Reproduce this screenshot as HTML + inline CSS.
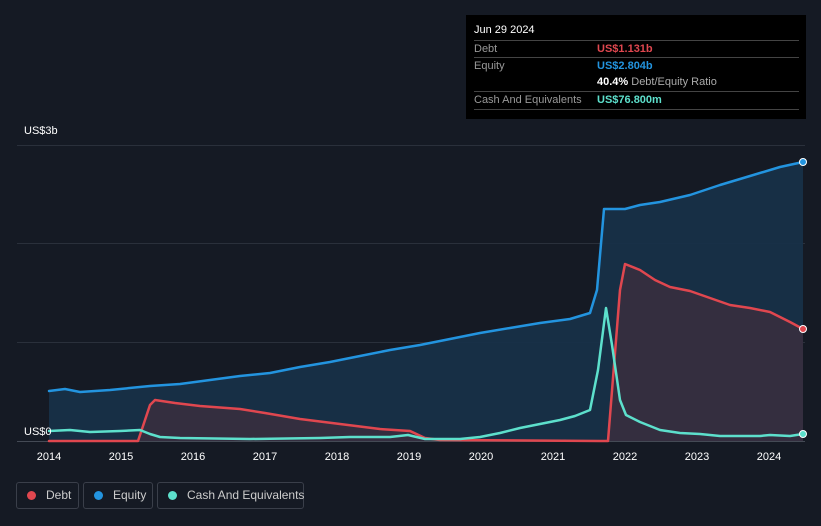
<!DOCTYPE html>
<html><head><style>
html,body{margin:0;width:821px;height:526px;overflow:hidden}
body{background:#151a24;font-family:"Liberation Sans",sans-serif;position:relative}
.tt{position:absolute;left:466px;top:15px;width:340px;height:104px;background:#000;color:#fff;font-size:11px}
.row{position:absolute;left:8px;width:325px;height:17px;border-top:1px solid #444}
.row span{position:absolute;top:2px;white-space:nowrap}
.lab{left:0;color:#999}
.val{left:123px;font-weight:bold}
.leg{position:absolute;top:482px;height:27px;border:1px solid #3a3f4a;border-radius:3px;color:#ccc;font-size:12px;line-height:25px;box-sizing:border-box;white-space:nowrap}
.dot{display:inline-block;width:9px;height:9px;border-radius:50%;margin:0 10px 0 10px;vertical-align:-1px}
</style></head><body>
<svg width="821" height="526" style="position:absolute;left:0;top:0">
<g stroke="#2a303b" stroke-width="1">
<line x1="17" y1="145.5" x2="805" y2="145.5"/>
<line x1="17" y1="243.5" x2="805" y2="243.5"/>
<line x1="17" y1="342.5" x2="805" y2="342.5"/>
<line x1="17" y1="441.5" x2="805" y2="441.5" stroke="#444a55"/>
</g>
<polygon fill="#173048" opacity="0.95" points="49,441 49,391 65,389 80,392 110,390 150,386 180,384 210,380 240,376 270,373 300,367 330,362 360,356 390,350 420,345 450,339 480,333 510,328 540,323 570,319 590,313 597,290 604,209 625,209 640,205 660,202 690,195 720,185 750,176 780,167 803,162 803,441"/>
<polygon fill="#3a2e3e" opacity="0.85" points="138,441 150,405 155,400 175,403 200,406 240,409 265,413 300,419 340,424 380,429 410,431 425,438 440,440 600,441 608,441 620,290 625,264 640,270 655,280 670,287 690,291 710,298 730,305 750,308 770,312 790,322 803,329 803,441"/>
<g fill="none" stroke-width="2.5" stroke-linejoin="round" stroke-linecap="round">
<polyline stroke="#2394df" points="49,391 65,389 80,392 110,390 150,386 180,384 210,380 240,376 270,373 300,367 330,362 360,356 390,350 420,345 450,339 480,333 510,328 540,323 570,319 590,313 597,290 604,209 625,209 640,205 660,202 690,195 720,185 750,176 780,167 803,162"/>
<polyline stroke="#e0474f" points="49,441 138,441 150,405 155,400 175,403 200,406 240,409 265,413 300,419 340,424 380,429 410,431 425,438 440,440 600,441 608,441 620,290 625,264 640,270 655,280 670,287 690,291 710,298 730,305 750,308 770,312 790,322 803,329"/>
<polyline stroke="#5de0cc" points="49,431 70,430 90,432 120,431 140,430 150,434 160,437 180,438 250,439 320,438 350,437 390,437 408,435 425,439 460,439 480,437 500,433 520,428 540,424 560,420 575,416 590,410 598,370 606,308 612,345 620,400 626,415 640,422 660,430 680,433 700,434 720,436 760,436 770,435 790,436 803,434"/>
</g>
<circle cx="803" cy="162" r="3.5" fill="#2394df" stroke="#fff" stroke-width="1"/>
<circle cx="803" cy="329" r="3.5" fill="#e0474f" stroke="#fff" stroke-width="1"/>
<circle cx="803" cy="434" r="3.5" fill="#5de0cc" stroke="#fff" stroke-width="1"/>
<g fill="#fff" font-size="11" font-family="Liberation Sans,sans-serif">
<text x="24" y="134">US$3b</text>
<text x="24" y="435">US$0</text>
<g text-anchor="middle">
<text x="49" y="460">2014</text><text x="121" y="460">2015</text><text x="193" y="460">2016</text><text x="265" y="460">2017</text><text x="337" y="460">2018</text><text x="409" y="460">2019</text><text x="481" y="460">2020</text><text x="553" y="460">2021</text><text x="625" y="460">2022</text><text x="697" y="460">2023</text><text x="769" y="460">2024</text>
</g></g>
</svg>
<div class="tt">
<div style="position:absolute;left:8px;top:9px">Jun 29 2024</div>
<div class="row" style="top:25px"><span class="lab">Debt</span><span class="val" style="color:#e0474f">US$1.131b</span></div>
<div class="row" style="top:42px"><span class="lab">Equity</span><span class="val" style="color:#2394df">US$2.804b</span></div>
<div class="row" style="top:59px;border-top:none"><span class="val" style="color:#fff">40.4% <span style="position:static;color:#aaa;font-weight:normal">Debt/Equity Ratio</span></span></div>
<div class="row" style="top:76px"><span class="lab">Cash And Equivalents</span><span class="val" style="color:#5de0cc">US$76.800m</span></div>
<div class="row" style="top:94px;height:0"></div>
</div>
<div class="leg" style="left:16px;width:63px"><span class="dot" style="background:#e0474f"></span>Debt</div>
<div class="leg" style="left:83px;width:70px"><span class="dot" style="background:#2394df"></span>Equity</div>
<div class="leg" style="left:157px;width:147px"><span class="dot" style="background:#5de0cc"></span>Cash And Equivalents</div>
</body></html>
